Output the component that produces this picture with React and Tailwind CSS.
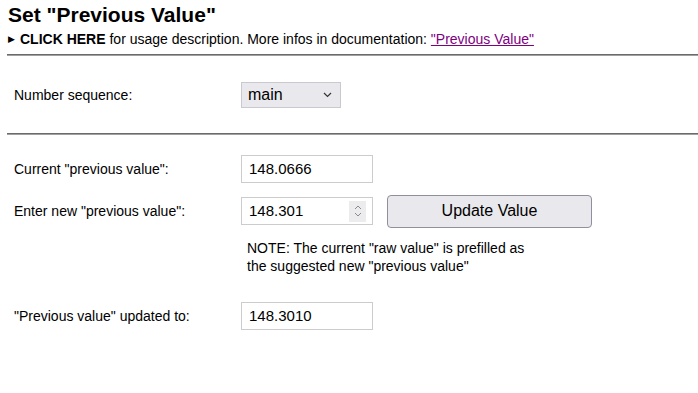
export default function App() {
  return (
    <div className="w-[698px] h-[393px] bg-white text-black font-['Liberation_Sans',Arial,sans-serif] overflow-hidden">
      <div className="pl-2 pt-[3px]">
        <h1 className="text-[21px] leading-[24px] font-bold">Set "Previous Value"</h1>
        <div className="text-[14px] leading-[16px] mt-[4px] flex items-center">
          <span className="text-[9px] mr-[5px]">▶</span>
          <span className="font-bold">CLICK HERE</span>
          <span>&nbsp;for usage description. More infos in documentation:&nbsp;</span>
          <a className="text-[#800080] underline">"Previous Value"</a>
        </div>
      </div>
      <div className="ml-[7px] mt-[7px] h-[2px] bg-[#6b6b6b] border-b border-[#a0a0a0]" />

      <div className="flex items-center h-[26px] mt-[26px]">
        <div className="w-[241px] pl-[14px] text-[14px]">Number sequence:</div>
        <div className="w-[100px] h-[26px] bg-[#e9e9ed] border border-[#c9c9cf] flex items-center justify-between pl-[6px] pr-[8px] text-[16px]">
          <span>main</span>
          <svg width="9" height="6" viewBox="0 0 9 6" fill="none" stroke="#333" strokeWidth="1.2">
            <path d="M1 1l3.5 3.5L8 1" />
          </svg>
        </div>
      </div>

      <div className="ml-[7px] mt-[25px] h-[2px] bg-[#6b6b6b] border-b border-[#a0a0a0]" />

      <div className="flex items-center h-[28px] mt-[20px]">
        <div className="w-[241px] pl-[14px] text-[14px]">Current "previous value":</div>
        <div className="w-[132px] h-[28px] border border-[#cccccc] flex items-center pl-[7px] text-[15px]">148.0666</div>
      </div>

      <div className="flex items-center h-[34px] mt-[11px]">
        <div className="w-[241px] pl-[14px] text-[14px]">Enter new "previous value":</div>
        <div className="w-[132px] h-[28px] border border-[#cccccc] flex items-center justify-between pl-[7px] pr-[6px] text-[15px]">
          <span>148.301</span>
          <div className="w-[17px] h-[21px] bg-[#ececef] flex items-center justify-center">
            <svg width="8" height="14" viewBox="0 0 8 14" fill="none" stroke="#8a8a8a" strokeWidth="1">
              <path d="M1 5L4 2L7 5M1 9L4 12L7 9" />
            </svg>
          </div>
        </div>
        <button className="ml-[14px] w-[205px] h-[33px] bg-[#e9e9ed] border border-[#8f8f9d] rounded-[4px] text-[16px]">Update Value</button>
      </div>

      <div className="ml-[247px] mt-[11px] text-[14px] leading-[18px]">
        NOTE: The current "raw value" is prefilled as<br />the suggested new "previous value"
      </div>

      <div className="flex items-center h-[28px] mt-[27px]">
        <div className="w-[241px] pl-[14px] text-[14px]">"Previous value" updated to:</div>
        <div className="w-[132px] h-[28px] border border-[#cccccc] flex items-center pl-[7px] text-[15px]">148.3010</div>
      </div>
    </div>
  );
}
